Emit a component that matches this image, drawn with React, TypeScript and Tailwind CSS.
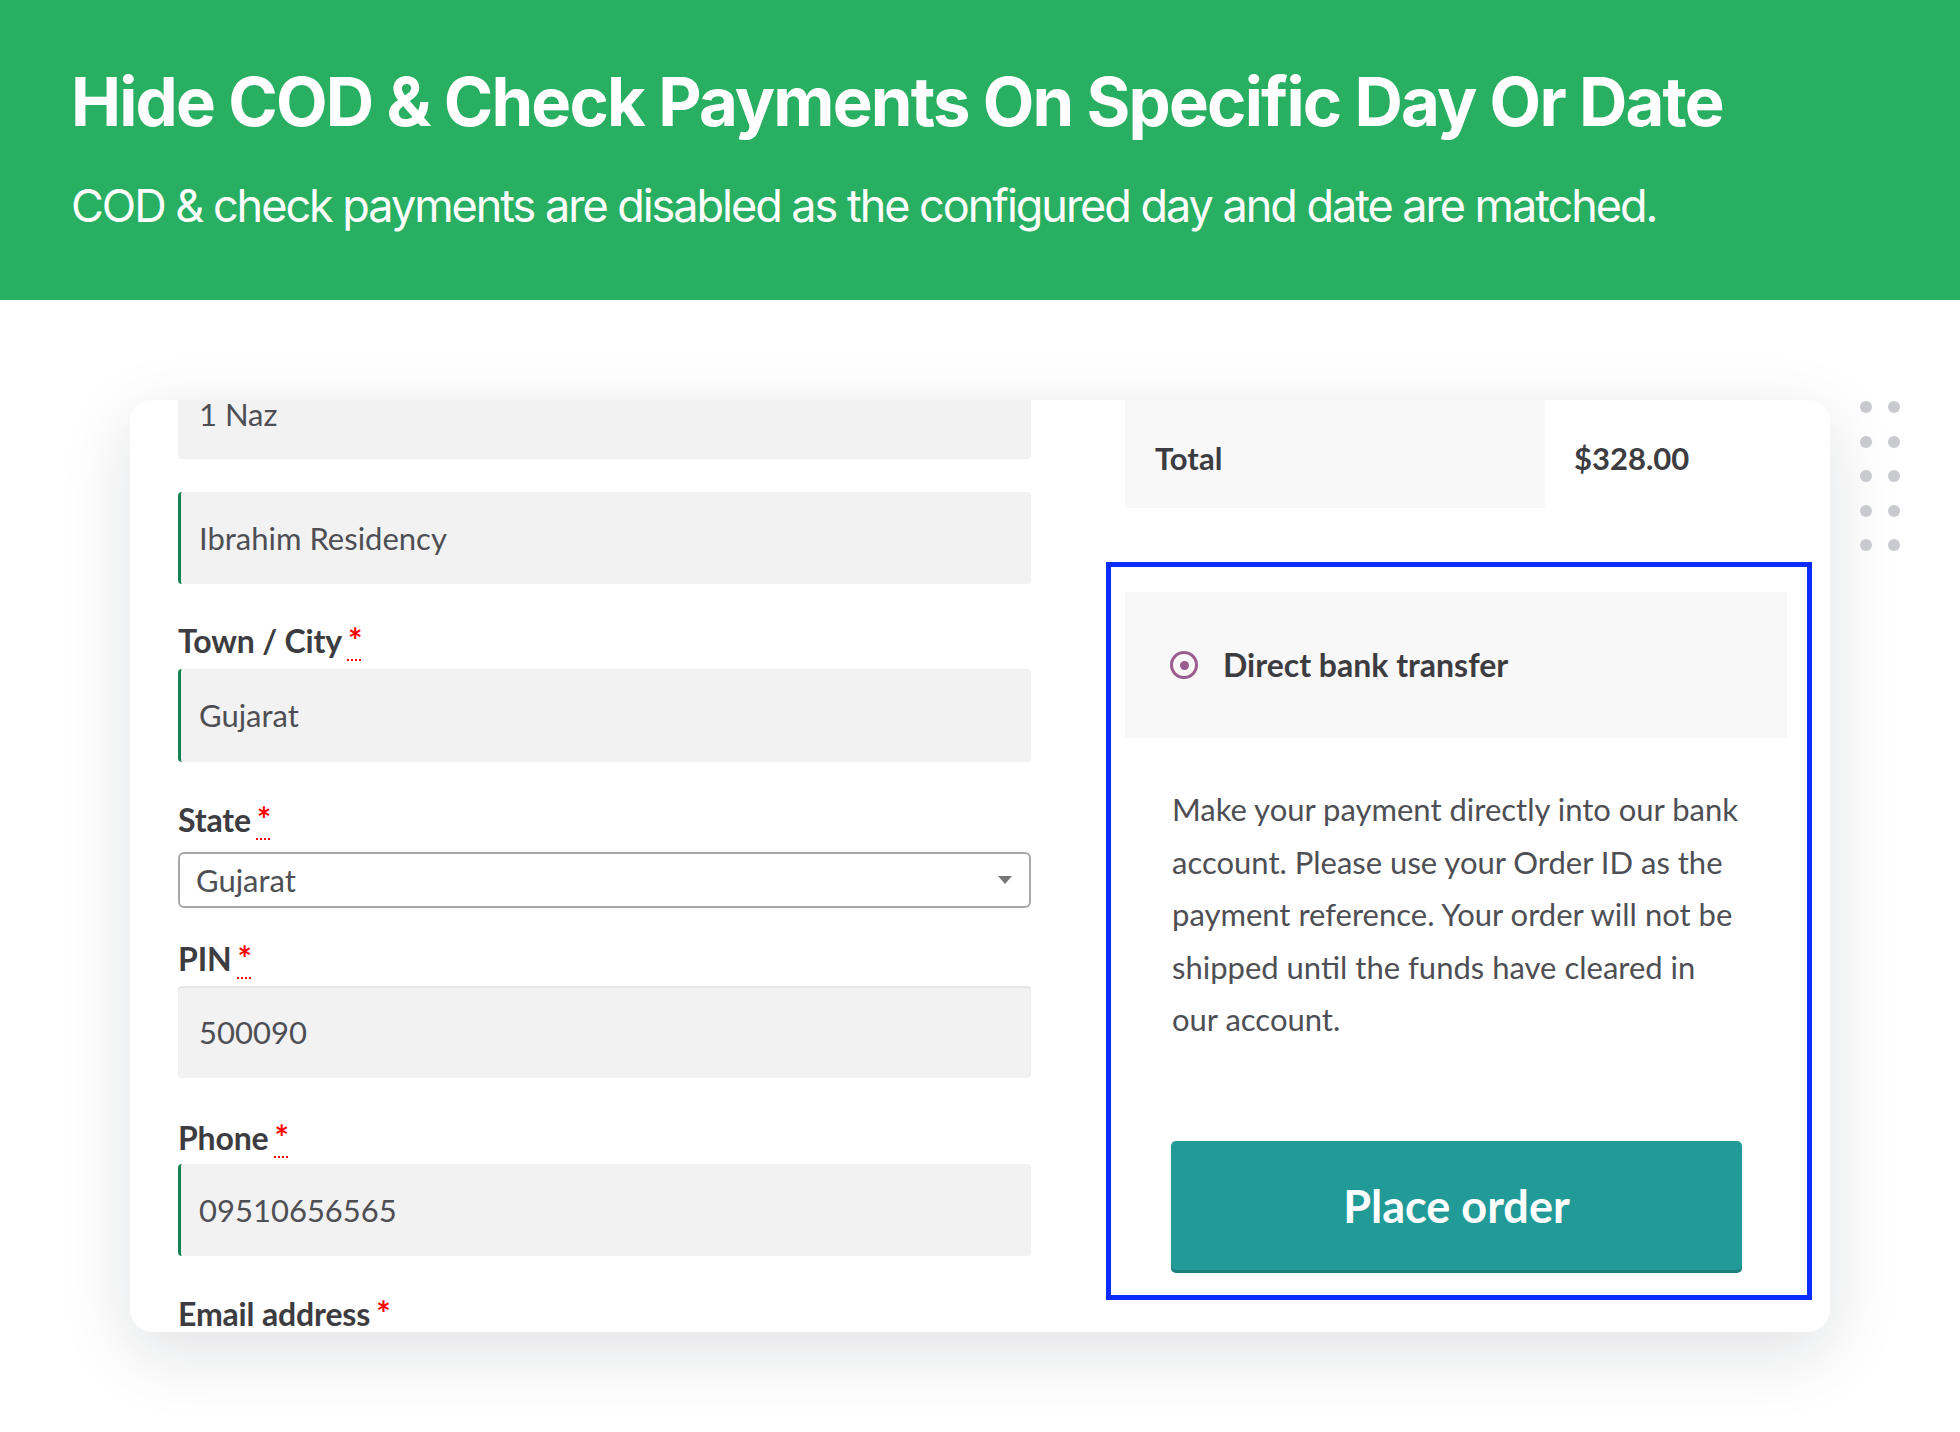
import React from "react";

const body = "font-['Lato','Liberation_Sans',sans-serif]";

function Req() {
  return (
    <abbr className="ml-[6px] text-[34px] text-[#ff0000] decoration-dotted underline underline-offset-[6px] decoration-[#ff0000] decoration-2" title="required">
      *
    </abbr>
  );
}

function Label({ text, mt }: { text: string; mt: string }) {
  return (
    <div className={`${mt} h-[36px] text-[32px] leading-[36px] font-bold text-[#3c3c41] tracking-[-0.005em]`}>
      {text}
      <Req />
    </div>
  );
}

function Input({ value, mt, green, h }: { value: string; mt: string; green?: boolean; h: string }) {
  return (
    <div
      className={`${mt} ${h} w-[853px] shrink-0 bg-[#f2f2f2] rounded-[4px] flex items-center text-[31px] text-[#4e4f54] ${
        green ? "border-l-[3px] border-[#13844f] pl-[18px]" : "pl-[21px]"
      }`}
    >
      {value}
    </div>
  );
}

export default function App() {
  return (
    <div className="w-[1960px] h-[1432px] bg-white overflow-hidden">
      <div className="h-[300px] bg-[#29af62] pl-[71px] pt-[68px] font-['Inter',sans-serif] text-white">
        <div className="text-[67px] leading-none font-bold tracking-[-0.027em]">
          Hide COD &amp; Check Payments On Specific Day Or Date
        </div>
        <div className="mt-[48px] text-[45px] leading-none font-normal tracking-[-0.045em]">
          COD &amp; check payments are disabled as the configured day and date are matched.
        </div>
      </div>

      <div className="flex items-start mt-[100px]">
        <div className={`ml-[130px] w-[1700px] h-[932px] bg-white rounded-[22px] overflow-hidden shadow-[0_20px_70px_rgba(15,23,42,0.13)] flex ${body}`}>
          {/* left column */}
          <div className="pl-[48px] w-[901px] flex flex-col -mt-[30px]">
            <Input value="1 Naz" mt="mt-0" h="h-[89px]" />
            <Input value="Ibrahim Residency" mt="mt-[33px]" h="h-[92px]" green />
            <Label text="Town / City" mt="mt-[38px]" />
            <Input value="Gujarat" mt="mt-[11px]" h="h-[93px]" green />
            <Label text="State" mt="mt-[39px]" />
            <div className="mt-[15px] h-[56px] w-[853px] shrink-0 border-2 border-[#a8a8a8] rounded-[6px] flex items-center justify-between pl-[16px] pr-[16px] text-[31px] text-[#4e4f54] bg-white">
              <span>Gujarat</span>
              <svg width="16" height="10" viewBox="0 0 16 10">
                <path d="M1 1 L15 1 L8 9 Z" fill="#777" />
              </svg>
            </div>
            <Label text="PIN" mt="mt-[32px]" />
            <div className="mt-[10px] h-[92px] w-[853px] shrink-0 bg-[#f2f2f2] rounded-[4px] flex items-center pl-[21px] text-[31px] text-[#4e4f54] shadow-[inset_0_2px_2px_rgba(0,0,0,0.06)]">
              500090
            </div>
            <Label text="Phone" mt="mt-[41px]" />
            <Input value="09510656565" mt="mt-[9px]" h="h-[92px]" green />
            <Label text="Email address" mt="mt-[39px]" />
          </div>

          {/* right column */}
          <div className="ml-[75px] w-[706px] flex flex-col">
            <div className="ml-[19px] flex h-[108px] text-[31px] font-bold text-[#3c3c41]">
              <div className="w-[420px] bg-[#f8f8f8] pl-[30px] pt-[8px] flex items-center">Total</div>
              <div className="pl-[29px] pt-[8px] flex items-center">$328.00</div>
            </div>

            <div className="mt-[54px] h-[738px] border-[5px] border-[#0b2cff] pt-[25px] pl-[14px] pr-[20px] flex flex-col">
              <div className="h-[146px] bg-[#f8f8f8] flex items-center pl-[45px]">
                <div className="w-[28px] h-[28px] rounded-full border-[3px] border-[#9b5c90] flex items-center justify-center">
                  <div className="w-[9px] h-[9px] rounded-full bg-[#9b5c90]" />
                </div>
                <span className="ml-[25px] text-[32px] font-bold text-[#3c3c41]">Direct bank transfer</span>
              </div>
              <div className="mt-[45px] pl-[47px] text-[31px] leading-[52.5px] text-[#4e4f54] whitespace-nowrap">
                Make your payment directly into our bank
                <br />
                account. Please use your Order ID as the
                <br />
                payment reference. Your order will not be
                <br />
                shipped until the funds have cleared in
                <br />
                our account.
              </div>
              <div className="mt-[95px] ml-[46px] w-[571px] h-[132px] bg-[#229b98] rounded-[5px] shadow-[inset_0_-3px_0_rgba(0,0,0,0.18)] flex items-center justify-center text-white text-[45px] font-bold">
                Place order
              </div>
            </div>
          </div>
        </div>

        <div className="ml-[30px] mt-[1px] grid grid-cols-2 gap-x-[16px] gap-y-[22.5px]">
          {Array.from({ length: 10 }).map((_, i) => (
            <div key={i} className="w-[12px] h-[12px] rounded-full bg-[#c9cacf]" />
          ))}
        </div>
      </div>
    </div>
  );
}
